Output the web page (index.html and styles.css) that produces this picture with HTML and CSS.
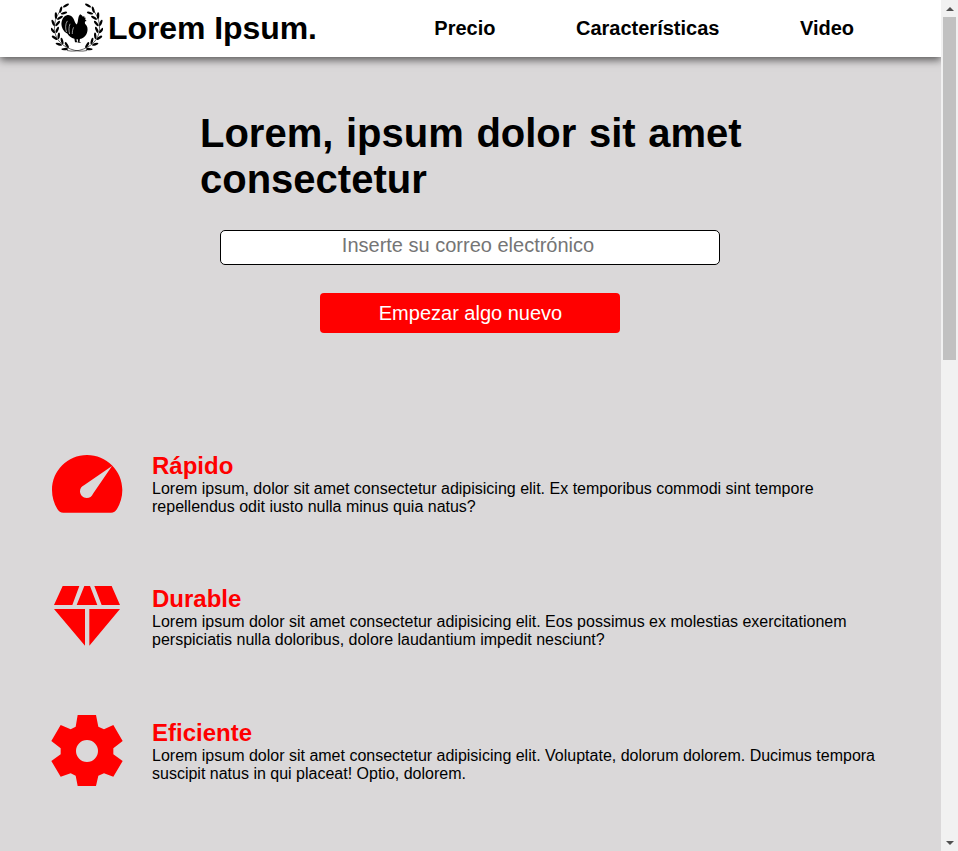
FILE: index.html
```html
<!DOCTYPE html>
<html lang="es">
<head>
<meta charset="utf-8">
<title>Lorem Ipsum.</title>
<link rel="stylesheet" href="styles.css">
</head>
<body>
<div class="page">
  <header class="header">
    <a class="brand" href="#">
      <svg class="logo" viewBox="0 0 52 50" aria-hidden="true">
        <defs>
          <g id="pair">
            <ellipse cx="6.200" cy="24" rx="1.200" ry="3.300" transform="rotate(30 6.200 24)"/>
            <ellipse cx="1.600" cy="24" rx="1.200" ry="3.300" transform="rotate(-30 1.600 24)"/>
          </g>
          <g id="branch">
            <path class="stem" d="M36 47.500C26 50 12 45 6.500 36 1.500 28 2.500 15 10.500 6.500"/>
            <use href="#pair" transform="rotate(-62 26 25)"/>
            <use href="#pair" transform="rotate(-44 26 25)"/>
            <use href="#pair" transform="rotate(-26 26 25)"/>
            <use href="#pair" transform="rotate(-8 26 25)"/>
            <use href="#pair" transform="rotate(10 26 25)"/>
            <use href="#pair" transform="rotate(28 26 25)"/>
            <use href="#pair" transform="rotate(46 26 25)"/>
            <ellipse cx="15" cy="2.500" rx="1.200" ry="3.300" transform="rotate(60 15 2.500)"/>
          </g>
        </defs>
        <use href="#branch"/>
        <use href="#branch" transform="translate(52 0) scale(-1 1)"/>
        <path class="rooster" d="M31 12.500l.9 1.300 1.300-.9.300 1.800 1.300 0-.7 1.600 1.500 1.600-1.600.5c-.2 1.300-.2 2.200.7 3.200.8.9 1.200 1.600 1.600 2.700.6 2.500.2 5.200-1.200 7.400-1.300 2.200-3.500 3.800-6.200 4.400l-.4 2.700 1.800.9-3.100 0-.4-3.400-1.300 0 .3 2 1.300.9-3.100 0-.6-3.500c-3.100-.7-5.800-2.700-7.100-5.300-2.700-.9-5.300-4.400-5.800-8.400-.4-4.400 1.800-8.900 5.300-9.800 3.600-.9 6.200 1.800 7.100 4.400.9 2.700 1.800 4.400 2.700 4.900 1.300-1.300 1.300-4.400 1.800-6.700.3-1.800.9-2.700 1.800-3.600z"/>
        <path class="plumes" d="M15.500 29c-1.300-3.600-1.300-8 .9-11.100M18.600 31c-.9-3.600-.9-6.700.4-10.200M21.300 31c0-2.700.3-4.500 1.300-6.700"/>
      </svg>
      <span class="brand-name">Lorem Ipsum.</span>
    </a>
    <nav class="nav">
      <a href="#">Precio</a>
      <a href="#">Características</a>
      <a href="#">Video</a>
    </nav>
  </header>

  <main>
    <section class="hero">
      <h1>Lorem, ipsum dolor sit amet consectetur</h1>
      <input class="email" type="email" placeholder="Inserte su correo electrónico">
      <button class="cta" type="button">Empezar algo nuevo</button>
    </section>

    <section class="features">
      <article class="feature">
        <svg class="icon" viewBox="33 9 216 216" aria-hidden="true">
          <path fill-rule="evenodd" d="M141 30C83 30 36 77 36 135c0 21 6 41 16 57 4 7 10 11 18 11h143c8 0 14-4 18-11 10-16 16-36 16-57C247 77 199 30 141 30zM216 63l-57 83c-3 8-10 13-19 13-11 0-20-9-20-20 0-8 5-15 12-18z"/>
        </svg>
        <div class="feature-text">
          <h2>Rápido</h2>
          <p>Lorem ipsum, dolor sit amet consectetur adipisicing elit. Ex temporibus commodi sint tempore repellendus odit iusto nulla minus quia natus?</p>
        </div>
      </article>
      <article class="feature">
        <svg class="icon" viewBox="33 18 216 216" aria-hidden="true">
          <path d="M68 33h50L97 90H42zM133 33h17l22 57h-62zM163 33h52l25 57h-55zM42 102h93v110zM148 102h92l-92 110z"/>
        </svg>
        <div class="feature-text">
          <h2>Durable</h2>
          <p>Lorem ipsum dolor sit amet consectetur adipisicing elit. Eos possimus ex molestias exercitationem perspiciatis nulla doloribus, dolore laudantium impedit nesciunt?</p>
        </div>
      </article>
      <article class="feature">
        <svg class="icon" viewBox="33 30 216 216" aria-hidden="true">
          <path fill-rule="evenodd" d="M113 30h55l7 35 17 8 28-13 28 48-28 22v18l28 20-28 47-28-10-17 7-7 31h-55l-6-31-15-7-30 10-28-47 28-20v-18l-28-22 28-48 30 13 15-8zM141 105a33 33 0 1 0 0 66 33 33 0 1 0 0-66z"/>
        </svg>
        <div class="feature-text">
          <h2>Eficiente</h2>
          <p>Lorem ipsum dolor sit amet consectetur adipisicing elit. Voluptate, dolorum dolorem. Ducimus tempora suscipit natus in qui placeat! Optio, dolorem.</p>
        </div>
      </article>
    </section>
  </main>
</div>

<aside class="scrollbar" aria-hidden="true">
  <span class="arrow arrow-up"></span>
  <span class="track"><span class="thumb"></span></span>
  <span class="arrow arrow-down"></span>
</aside>
</body>
</html>
```

FILE: styles.css
```css
* {
  box-sizing: border-box;
}

html,
body {
  height: 100%;
  margin: 0;
  overflow: hidden;
}

body {
  display: flex;
  background: #dad8d9;
  color: #000;
  font-family: "Liberation Sans", Arial, sans-serif;
}

.page {
  flex: 1;
  min-width: 0;
  height: 100%;
  overflow: hidden;
}

/* Header */
.header {
  position: relative;
  display: flex;
  align-items: center;
  height: 57px;
  padding: 0 87px 0 51px;
  background: #fff;
  box-shadow: 0 3px 8px rgba(0, 0, 0, 0.6);
}

.brand {
  display: flex;
  align-items: center;
  gap: 5px;
  color: #000;
  text-decoration: none;
}

.logo {
  display: block;
  width: 52px;
  height: 50px;
  margin-top: -1px;
  fill: #000;
}

.stem {
  fill: none;
  stroke: #000;
  stroke-width: 0.6;
}

.rooster {
  fill: #000;
}

.plumes {
  fill: none;
  stroke: #fff;
  stroke-width: 0.6;
}

.brand-name {
  margin-top: -2px;
  font-size: 32px;
  font-weight: 700;
  line-height: 1;
  letter-spacing: -0.08px;
}

.nav {
  display: flex;
  gap: 80.5px;
  margin-left: auto;
}

.nav a {
  color: #000;
  font-size: 20px;
  font-weight: 700;
  text-decoration: none;
}

/* Hero */
.hero {
  display: flex;
  flex-direction: column;
  align-items: center;
  width: 540px;
  margin-left: 200px;
  padding-top: 53px;
}

.hero h1 {
  align-self: flex-start;
  width: 560px;
  margin: 0 0 28px;
  font-size: 40px;
  line-height: 46px;
  font-weight: 700;
  word-spacing: 1.5px;
}

.email {
  display: block;
  width: 500px;
  height: 35px;
  margin: 0 0 28px;
  padding: 0 14px 5px 10px;
  border: 1px solid #000;
  border-radius: 5px;
  background: #fff;
  font-family: inherit;
  font-size: 20px;
  text-align: center;
}

.email::placeholder {
  color: #757575;
  opacity: 1;
}

.cta {
  display: block;
  width: 300px;
  height: 40px;
  padding: 0 0 0 1px;
  border: 0;
  border-radius: 4px;
  background: #f00;
  color: #fff;
  font-family: inherit;
  font-size: 20px;
}

/* Features */
.features {
  display: flex;
  flex-direction: column;
  gap: 61.4px;
  padding: 115px 0 60px 51px;
}

.feature {
  display: flex;
  align-items: center;
  gap: 29px;
}

.icon {
  display: block;
  flex: none;
  width: 72px;
  height: 72px;
  fill: #f00;
}

.feature-text {
  width: 735px;
}

.feature-text h2 {
  margin: 0;
  color: #f00;
  font-size: 24px;
  font-weight: 700;
}

.feature-text p {
  margin: 0;
  font-size: 16px;
}

/* Scrollbar drawn over the window edge */
.scrollbar {
  display: flex;
  flex: none;
  flex-direction: column;
  width: 17px;
  height: 100%;
  background: #f1f1f1;
}

.arrow {
  display: flex;
  flex: none;
  align-items: center;
  justify-content: center;
  height: 17px;
}

.arrow::before {
  content: "";
  border-left: 4px solid transparent;
  border-right: 4px solid transparent;
}

.arrow-up::before {
  border-bottom: 4px solid #505050;
}

.arrow-down::before {
  border-top: 4px solid #505050;
}

.track {
  flex: 1;
  padding: 0 2px;
}

.thumb {
  display: block;
  height: 343px;
  background: #c1c1c1;
}
```
